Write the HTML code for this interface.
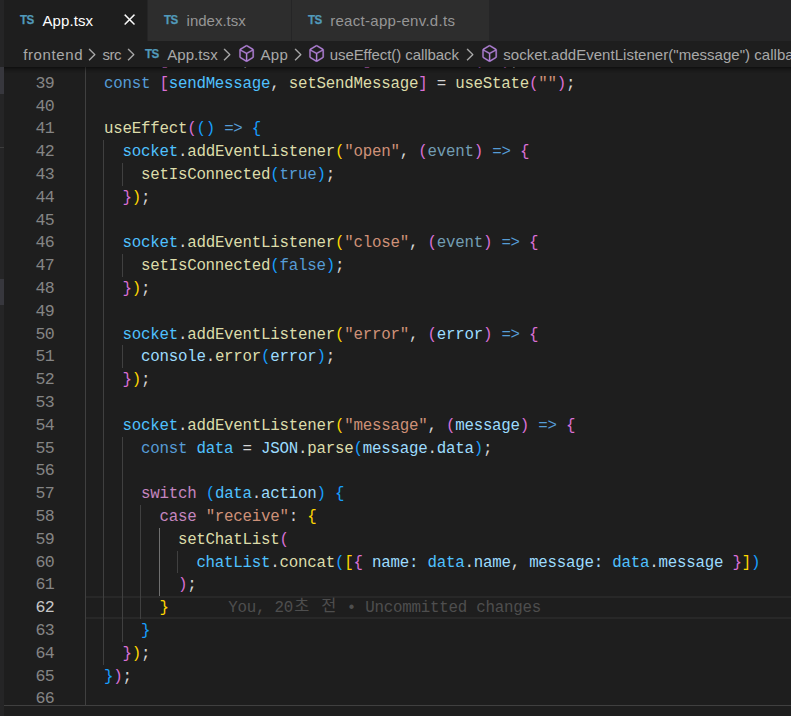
<!DOCTYPE html>
<html lang="ko">
<head>
<meta charset="utf-8">
<title>App.tsx</title>
<style>
html,body{margin:0;padding:0;background:#1e1e1e}
body{width:791px;height:716px;overflow:hidden;position:relative;font-family:"Liberation Sans","Noto Sans CJK KR",sans-serif;color:#d4d4d4}
div,span{box-sizing:border-box}
.abs{position:absolute}
/* left sidebar sliver */
#side{position:absolute;left:0;top:0;width:4px;height:716px;background:#252526}
#side i{position:absolute;left:0;width:4px;background:#37373d;display:block}
/* tabs */
#tabs{position:absolute;left:4px;top:0;width:787px;height:41px;background:#252526}
.tab{position:absolute;top:0;height:41px;background:#2d2d2d;color:#969696;font-size:15px;line-height:41px;white-space:pre}
.tab.act{background:#1e1e1e;color:#fff}
.ts{position:absolute;font-family:"Liberation Sans",sans-serif;font-weight:bold;font-size:12.3px;color:#519aba;letter-spacing:-0.7px;-webkit-text-stroke:.25px #519aba;display:inline-block;transform:scaleX(.94);transform-origin:0 0;line-height:12px}
.tl{position:absolute;top:0;line-height:41px}
/* breadcrumbs */
#bc{position:absolute;left:4px;top:41px;width:787px;height:26px;background:#1e1e1e;color:#a9a9a9;font-size:15px;line-height:26px;white-space:pre;overflow:hidden}
#bc span.t{position:absolute;top:.6px}
#bc svg{position:absolute}
/* editor */
#ed{position:absolute;left:4px;top:67px;width:787px;height:638px;background:#1e1e1e;overflow:hidden}
#edin{position:absolute;left:-4px;top:-67px;width:791px;height:716px}
#shadow{position:absolute;left:4px;top:67px;width:787px;height:6px;box-shadow:#000 0 6px 6px -6px inset}
.ln{position:absolute;left:0;width:54.1px;height:22.8px;line-height:22.8px;text-align:right;color:#858585;font-family:"Liberation Mono","Noto Sans CJK KR",monospace;font-size:16.6px;letter-spacing:-.72px}
.ln.cur{color:#c6c6c6}
.cl{position:absolute;height:22.8px;line-height:22.8px;white-space:pre;font-family:"Liberation Mono","Noto Sans CJK KR",monospace;font-size:15.8px;letter-spacing:-.24px;color:#d4d4d4}
.k{color:#569cd6}.c{color:#c586c0}.v{color:#9cdcfe}.n{color:#4fc1ff}.f{color:#dcdcaa}.s{color:#ce9178}.p{color:#d4d4d4}
.u{color:#729db3}
.b1{color:#ffd700}.b2{color:#da70d6}.b3{color:#179fff}
.g{position:absolute;width:1px;background:#404040}
.ga{background:#707070}
#curline{position:absolute;left:86px;top:596px;width:705px;height:23px;border-top:2px solid #282828;border-bottom:2px solid #282828}
#blame{position:absolute;left:228.3px;top:597.1px;height:22.8px;line-height:22.8px;white-space:pre;font-family:"Liberation Mono","Noto Sans CJK KR",monospace;font-size:15.8px;letter-spacing:-.24px;color:#4e4e4e}
.kr{position:relative;top:-1px;letter-spacing:0;display:inline-block;width:17.7px;text-align:center;font-size:16.4px;line-height:22.8px;vertical-align:top}
#panel{position:absolute;left:4px;top:705px;width:787px;height:11px;background:#1e1e1e;border-top:1px solid #404040}
</style>
</head>
<body>
<div id="ed"><div id="edin">
<div id="curline"></div>
<div class="g" style="left:85px;top:49.00px;height:661.20px"></div>
<div class="g" style="left:103px;top:140.20px;height:524.40px"></div>
<div class="g" style="left:122px;top:163.00px;height:22.80px"></div>
<div class="g" style="left:122px;top:254.20px;height:22.80px"></div>
<div class="g" style="left:122px;top:345.40px;height:22.80px"></div>
<div class="g" style="left:122px;top:436.60px;height:205.20px"></div>
<div class="g" style="left:140px;top:505.00px;height:114.00px"></div>
<div class="g ga" style="left:159px;top:527.80px;height:68.40px"></div>
<div class="g" style="left:177px;top:550.60px;height:22.80px"></div>
<div class="ln" style="top:49.90px">38</div>
<div class="cl" style="top:49.90px;left:103.98px"><span class="k">const</span><span class="p"> </span><span class="b2">[</span><span class="n">userName</span><span class="p">, </span><span class="f">setUserName</span><span class="b2">]</span><span class="p"> = </span><span class="f">useState</span><span class="b2">(</span><span class="s">""</span><span class="b2">)</span><span class="p">;</span></div>
<div class="ln" style="top:72.70px">39</div>
<div class="cl" style="top:72.70px;left:103.98px"><span class="k">const</span><span class="p"> </span><span class="b2">[</span><span class="n">sendMessage</span><span class="p">, </span><span class="f">setSendMessage</span><span class="b2">]</span><span class="p"> = </span><span class="f">useState</span><span class="b2">(</span><span class="s">""</span><span class="b2">)</span><span class="p">;</span></div>
<div class="ln" style="top:95.50px">40</div>
<div class="ln" style="top:118.30px">41</div>
<div class="cl" style="top:118.30px;left:103.98px"><span class="f">useEffect</span><span class="b2">(</span><span class="b3">()</span><span class="p"> </span><span class="k">=&gt;</span><span class="p"> </span><span class="b3">{</span></div>
<div class="ln" style="top:141.10px">42</div>
<div class="cl" style="top:141.10px;left:122.46px"><span class="n">socket</span><span class="p">.</span><span class="f">addEventListener</span><span class="b1">(</span><span class="s">"open"</span><span class="p">, </span><span class="b2">(</span><span class="u">event</span><span class="b2">)</span><span class="p"> </span><span class="k">=&gt;</span><span class="p"> </span><span class="b2">{</span></div>
<div class="ln" style="top:163.90px">43</div>
<div class="cl" style="top:163.90px;left:140.94px"><span class="f">setIsConnected</span><span class="b3">(</span><span class="k">true</span><span class="b3">)</span><span class="p">;</span></div>
<div class="ln" style="top:186.70px">44</div>
<div class="cl" style="top:186.70px;left:122.46px"><span class="b2">}</span><span class="b1">)</span><span class="p">;</span></div>
<div class="ln" style="top:209.50px">45</div>
<div class="ln" style="top:232.30px">46</div>
<div class="cl" style="top:232.30px;left:122.46px"><span class="n">socket</span><span class="p">.</span><span class="f">addEventListener</span><span class="b1">(</span><span class="s">"close"</span><span class="p">, </span><span class="b2">(</span><span class="u">event</span><span class="b2">)</span><span class="p"> </span><span class="k">=&gt;</span><span class="p"> </span><span class="b2">{</span></div>
<div class="ln" style="top:255.10px">47</div>
<div class="cl" style="top:255.10px;left:140.94px"><span class="f">setIsConnected</span><span class="b3">(</span><span class="k">false</span><span class="b3">)</span><span class="p">;</span></div>
<div class="ln" style="top:277.90px">48</div>
<div class="cl" style="top:277.90px;left:122.46px"><span class="b2">}</span><span class="b1">)</span><span class="p">;</span></div>
<div class="ln" style="top:300.70px">49</div>
<div class="ln" style="top:323.50px">50</div>
<div class="cl" style="top:323.50px;left:122.46px"><span class="n">socket</span><span class="p">.</span><span class="f">addEventListener</span><span class="b1">(</span><span class="s">"error"</span><span class="p">, </span><span class="b2">(</span><span class="v">error</span><span class="b2">)</span><span class="p"> </span><span class="k">=&gt;</span><span class="p"> </span><span class="b2">{</span></div>
<div class="ln" style="top:346.30px">51</div>
<div class="cl" style="top:346.30px;left:140.94px"><span class="v">console</span><span class="p">.</span><span class="f">error</span><span class="b3">(</span><span class="v">error</span><span class="b3">)</span><span class="p">;</span></div>
<div class="ln" style="top:369.10px">52</div>
<div class="cl" style="top:369.10px;left:122.46px"><span class="b2">}</span><span class="b1">)</span><span class="p">;</span></div>
<div class="ln" style="top:391.90px">53</div>
<div class="ln" style="top:414.70px">54</div>
<div class="cl" style="top:414.70px;left:122.46px"><span class="n">socket</span><span class="p">.</span><span class="f">addEventListener</span><span class="b1">(</span><span class="s">"message"</span><span class="p">, </span><span class="b2">(</span><span class="v">message</span><span class="b2">)</span><span class="p"> </span><span class="k">=&gt;</span><span class="p"> </span><span class="b2">{</span></div>
<div class="ln" style="top:437.50px">55</div>
<div class="cl" style="top:437.50px;left:140.94px"><span class="k">const</span><span class="p"> </span><span class="n">data</span><span class="p"> = </span><span class="v">JSON</span><span class="p">.</span><span class="f">parse</span><span class="b3">(</span><span class="v">message</span><span class="p">.</span><span class="v">data</span><span class="b3">)</span><span class="p">;</span></div>
<div class="ln" style="top:460.30px">56</div>
<div class="ln" style="top:483.10px">57</div>
<div class="cl" style="top:483.10px;left:140.94px"><span class="c">switch</span><span class="p"> </span><span class="b3">(</span><span class="n">data</span><span class="p">.</span><span class="v">action</span><span class="b3">)</span><span class="p"> </span><span class="b3">{</span></div>
<div class="ln" style="top:505.90px">58</div>
<div class="cl" style="top:505.90px;left:159.42px"><span class="c">case</span><span class="p"> </span><span class="s">"receive"</span><span class="p">: </span><span class="b1">{</span></div>
<div class="ln" style="top:528.70px">59</div>
<div class="cl" style="top:528.70px;left:177.90px"><span class="f">setChatList</span><span class="b2">(</span></div>
<div class="ln" style="top:551.50px">60</div>
<div class="cl" style="top:551.50px;left:196.38px"><span class="n">chatList</span><span class="p">.</span><span class="f">concat</span><span class="b3">(</span><span class="b1">[</span><span class="b2">{</span><span class="p"> </span><span class="v">name:</span><span class="p"> </span><span class="n">data</span><span class="p">.</span><span class="v">name</span><span class="p">, </span><span class="v">message:</span><span class="p"> </span><span class="n">data</span><span class="p">.</span><span class="v">message</span><span class="p"> </span><span class="b2">}</span><span class="b1">]</span><span class="b3">)</span></div>
<div class="ln" style="top:574.30px">61</div>
<div class="cl" style="top:574.30px;left:177.90px"><span class="b2">)</span><span class="p">;</span></div>
<div class="ln cur" style="top:597.10px">62</div>
<div class="cl" style="top:597.10px;left:159.42px"><span class="b1">}</span></div>
<div class="ln" style="top:619.90px">63</div>
<div class="cl" style="top:619.90px;left:140.94px"><span class="b3">}</span></div>
<div class="ln" style="top:642.70px">64</div>
<div class="cl" style="top:642.70px;left:122.46px"><span class="b2">}</span><span class="b1">)</span><span class="p">;</span></div>
<div class="ln" style="top:665.50px">65</div>
<div class="cl" style="top:665.50px;left:103.98px"><span class="b3">}</span><span class="b2">)</span><span class="p">;</span></div>
<div class="ln" style="top:688.30px">66</div>
<div id="blame">You, 20<span class="kr">초</span> <span class="kr">전</span> • Uncommitted changes</div>
</div></div>
<div id="shadow"></div>
<div id="tabs">
  <div class="tab act" style="left:0;width:142.5px"><span class="ts" style="left:16.1px;top:14px">TS</span><span class="tl" style="left:38.5px;letter-spacing:.1px">App.tsx</span>
    <svg class="abs" style="left:116.4px;top:9.8px" width="19.2" height="19.2" viewBox="0 0 16 16"><path d="M8 8.707l3.646 3.647.708-.707L8.707 8l3.647-3.646-.707-.708L8 7.293 4.354 3.646l-.707.708L7.293 8l-3.646 3.646.707.708L8 8.707z" fill="#fff" stroke="#fff" stroke-width=".3"/></svg>
  </div>
  <div class="tab" style="left:143.5px;width:143.5px"><span class="ts" style="left:16.6px;top:14px">TS</span><span class="tl" style="left:39.1px">index.tsx</span></div>
  <div class="tab" style="left:288px;width:196.6px"><span class="ts" style="left:16.1px;top:14px">TS</span><span class="tl" style="left:38.2px;letter-spacing:.29px">react-app-env.d.ts</span></div>
</div>
<div id="bc">
  <span class="t" style="left:19.2px;letter-spacing:.63px">frontend</span>
  <svg class="abs" style="left:78.1px;top:3.7px" width="19.2" height="19.2" viewBox="0 0 16 16"><path d="M10.072 8.024L5.715 3.667l.618-.62L11 7.716v.618L6.333 13l-.618-.619 4.357-4.357z" fill="#b0b0b0" stroke="#b0b0b0" stroke-width=".3"/></svg>
  <span class="t" style="left:98.4px;letter-spacing:-.5px">src</span>
  <svg class="abs" style="left:117.1px;top:3.7px" width="19.2" height="19.2" viewBox="0 0 16 16"><path d="M10.072 8.024L5.715 3.667l.618-.62L11 7.716v.618L6.333 13l-.618-.619 4.357-4.357z" fill="#b0b0b0" stroke="#b0b0b0" stroke-width=".3"/></svg>
  <span class="ts" style="left:141.1px;top:6.8px">TS</span>
  <span class="t" style="left:163.2px;letter-spacing:.08px">App.tsx</span>
  <svg class="abs" style="left:213.2px;top:3.7px" width="19.2" height="19.2" viewBox="0 0 16 16"><path d="M10.072 8.024L5.715 3.667l.618-.62L11 7.716v.618L6.333 13l-.618-.619 4.357-4.357z" fill="#b0b0b0" stroke="#b0b0b0" stroke-width=".3"/></svg>
  <svg class="abs" style="left:232.9px;top:2.6px" width="19.2" height="19.2" viewBox="0 0 16 16"><path d="M13.51 4l-5-3h-1l-5 3-.49.86v6l.49.85 5 3h1l5-3 .49-.85v-6L13.51 4zm-6 9.56l-4.5-2.7V5.7l4.5 2.45v5.41zM3.27 4.7l4.74-2.84 4.74 2.84-4.74 2.59L3.27 4.7zm9.74 6.16l-4.5 2.7V8.15l4.5-2.45v5.16z" fill="#b180d7" stroke="#b180d7" stroke-width=".25"/></svg>
  <span class="t" style="left:256.5px;letter-spacing:.3px">App</span>
  <svg class="abs" style="left:283.5px;top:3.7px" width="19.2" height="19.2" viewBox="0 0 16 16"><path d="M10.072 8.024L5.715 3.667l.618-.62L11 7.716v.618L6.333 13l-.618-.619 4.357-4.357z" fill="#b0b0b0" stroke="#b0b0b0" stroke-width=".3"/></svg>
  <svg class="abs" style="left:303.4px;top:2.6px" width="19.2" height="19.2" viewBox="0 0 16 16"><path d="M13.51 4l-5-3h-1l-5 3-.49.86v6l.49.85 5 3h1l5-3 .49-.85v-6L13.51 4zm-6 9.56l-4.5-2.7V5.7l4.5 2.45v5.41zM3.27 4.7l4.74-2.84 4.74 2.84-4.74 2.59L3.27 4.7zm9.74 6.16l-4.5 2.7V8.15l4.5-2.45v5.16z" fill="#b180d7" stroke="#b180d7" stroke-width=".25"/></svg>
  <span class="t" style="left:325.7px;letter-spacing:-.07px">useEffect() callback</span>
  <svg class="abs" style="left:456.3px;top:3.7px" width="19.2" height="19.2" viewBox="0 0 16 16"><path d="M10.072 8.024L5.715 3.667l.618-.62L11 7.716v.618L6.333 13l-.618-.619 4.357-4.357z" fill="#b0b0b0" stroke="#b0b0b0" stroke-width=".3"/></svg>
  <svg class="abs" style="left:475.6px;top:2.6px" width="19.2" height="19.2" viewBox="0 0 16 16"><path d="M13.51 4l-5-3h-1l-5 3-.49.86v6l.49.85 5 3h1l5-3 .49-.85v-6L13.51 4zm-6 9.56l-4.5-2.7V5.7l4.5 2.45v5.41zM3.27 4.7l4.74-2.84 4.74 2.84-4.74 2.59L3.27 4.7zm9.74 6.16l-4.5 2.7V8.15l4.5-2.45v5.16z" fill="#b180d7" stroke="#b180d7" stroke-width=".25"/></svg>
  <span class="t" style="left:499.3px;letter-spacing:.03px">socket.addEventListener("message") callback</span>
</div>
<div id="panel"></div>
<div id="side"><i style="top:67px;height:27px"></i><i style="top:147px;height:1px;background:#3c3c3c"></i><i style="top:279px;height:26px"></i></div>
</body>
</html>
